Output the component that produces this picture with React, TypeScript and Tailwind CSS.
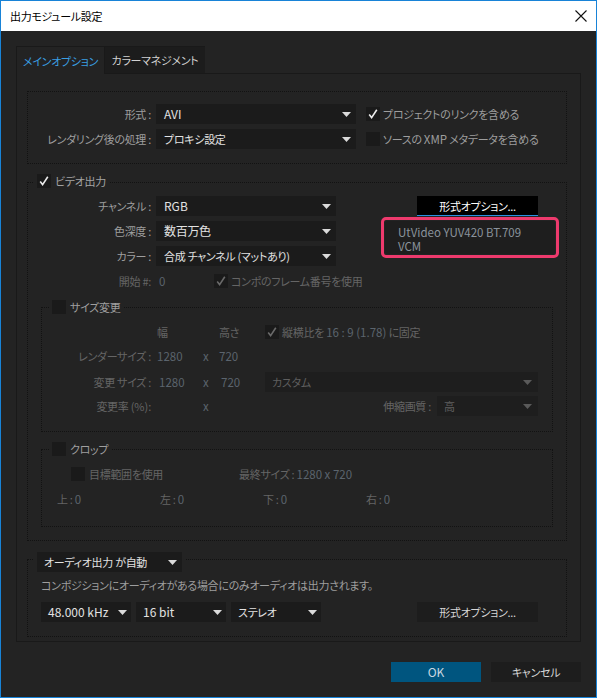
import React from "react";

const Arrow = ({ dim = false }: { dim?: boolean }) => (
  <svg width="9" height="5" viewBox="0 0 9 5" className="shrink-0">
    <path d="M0 0H9L4.5 5Z" fill={dim ? "#5a5a5a" : "#dadada"} />
  </svg>
);

const Check = ({ checked = false, dim = false }: { checked?: boolean; dim?: boolean }) => (
  <div className="flex h-[14px] w-[14px] shrink-0 items-center justify-center bg-[#1a1a1a]">
    {checked && (
      <svg width="12" height="12" viewBox="0 0 12 12">
        <path d="M2.2 6.6L4.6 9.6L9.8 1.8" fill="none" stroke={dim ? "#6a6a6a" : "#ececec"} strokeWidth="1.6" />
      </svg>
    )}
  </div>
);

const LAT = "text-[12px] tracking-normal";

function Select({
  className,
  text,
  dim = false,
  latin = false,
}: {
  className: string;
  text: string;
  dim?: boolean;
  latin?: boolean;
}) {
  return (
    <div className={`flex h-[20px] shrink-0 items-center justify-between ${className}`}>
      <span className={`${dim ? "text-[#5e5e5e]" : "text-[#e2e2e2]"} ${latin ? LAT : ""}`}>{text}</span>
      <Arrow dim={dim} />
    </div>
  );
}

const LBL = "text-[#9e9e9e]";
const DIM = "text-[#656565]";
const NUM = "text-[#5b646d] text-[11.5px] tracking-normal";

export default function App() {
  return (
    <div className="flex h-[698px] w-[597px] flex-col whitespace-nowrap border border-[#1883d7] bg-[#232323] font-['Noto_Sans_CJK_JP',sans-serif] text-[11px] leading-[14px] tracking-[-0.3px] [font-feature-settings:'palt']">
      {/* title bar */}
      <div className="flex h-[30px] shrink-0 items-center justify-between bg-white pl-[9px] pr-[9px] text-black">
        <span>出力モジュール設定</span>
        <svg width="12" height="12" viewBox="0 0 12 12">
          <path d="M0.5 0.5L11.5 11.5M11.5 0.5L0.5 11.5" stroke="#111" strokeWidth="1.1" />
        </svg>
      </div>

      <div className="flex flex-col pl-[15px] pt-[15px]">
        {/* tabs */}
        <div className="flex h-[28px] w-[565px]">
          <div className="flex w-[89px] shrink-0 items-center justify-center border-l border-r border-t border-[#191919] text-[#3a9fe2]">
            メインオプション
          </div>
          <div className="flex w-[100px] shrink-0 items-center justify-center border-b border-t border-[#191919] bg-[#1c1c1c] text-[#d2d2d2]">
            カラーマネジメント
          </div>
          <div className="flex-1 border-b border-[#191919]" />
        </div>

        {/* panel */}
        <div className="flex h-[568px] w-[565px] flex-col border-b border-l border-r border-[#191919] pl-[10px] pt-[17px]">
          {/* group 1 */}
          <div className="flex h-[73px] w-[540px] flex-col gap-[5px] border border-dotted border-[#121212] pt-[12px]">
            <div className="flex items-center">
              <span className={`w-[123px] text-right ${LBL}`}>形式 :</span>
              <Select className="ml-[5px] w-[200px] bg-[#1b1b1b] pl-[8px] pr-[5px]" text="AVI" latin />
              <div className="ml-[10px]"><Check checked /></div>
              <span className={`ml-[3px] ${LBL}`}>プロジェクトのリンクを含める</span>
            </div>
            <div className="flex items-center">
              <span className={`w-[123px] text-right ${LBL}`}>レンダリング後の処理 :</span>
              <Select className="ml-[5px] w-[200px] bg-[#1b1b1b] pl-[8px] pr-[5px]" text="プロキシ設定" />
              <div className="ml-[10px]"><Check /></div>
              <span className={`ml-[3px] ${LBL}`}>
                ソースの <span className="text-[11.5px] tracking-normal">XMP</span> メタデータを含める
              </span>
            </div>
          </div>

          {/* video group */}
          <div className="relative mt-[18px] h-[359px] w-[540px] border border-dotted border-[#121212]">
            <div className="absolute left-[6px] top-[-9px] flex items-center gap-[4px] bg-[#232323] px-[3px]">
              <Check checked />
              <span className="text-[#a3a3a3]">ビデオ出力</span>
            </div>

            <div className="flex pt-[13px]">
              <div className="flex w-[308px] shrink-0 flex-col">
                <div className="flex flex-col gap-[5px]">
                  <div className="flex items-center">
                    <span className={`w-[123px] text-right ${LBL}`}>チャンネル :</span>
                    <Select className="ml-[5px] w-[180px] bg-[#1b1b1b] pl-[8px] pr-[5px]" text="RGB" latin />
                  </div>
                  <div className="flex items-center">
                    <span className={`w-[123px] text-right ${LBL}`}>色深度 :</span>
                    <Select className="ml-[5px] w-[180px] bg-[#1b1b1b] pl-[8px] pr-[5px] text-[12px]" text="数百万色" />
                  </div>
                  <div className="flex items-center">
                    <span className={`w-[123px] text-right ${LBL}`}>カラー :</span>
                    <Select className="ml-[5px] w-[180px] bg-[#1b1b1b] pl-[8px] pr-[5px]" text="合成 チャンネル (マットあり)" />
                  </div>
                </div>
                <div className="mt-[8px] flex h-[14px] items-center">
                  <span className={`w-[123px] shrink-0 text-right ${DIM}`}>開始 #:</span>
                  <span className={`ml-[8px] w-[55px] shrink-0 ${NUM}`}>0</span>
                  <Check checked dim />
                  <span className={`ml-[3px] ${DIM}`}>コンポのフレーム番号を使用</span>
                </div>
              </div>

              <div className="ml-[45px] flex w-[178px] shrink-0 flex-col">
                <div className="ml-[36px] flex h-[20px] w-[121px] items-center justify-center border-b border-[#2a8fe0] bg-black text-white">
                  形式オプション...
                </div>
                <div className="mt-[1px] h-[41px] rounded-[5px] border-[3px] border-[#ee3a6d] p-[1px]">
                  <div className="flex h-full flex-col rounded-[3px] bg-[#1e1e1e] pl-[13px] pt-[4px] text-[11.5px] leading-[14px] tracking-normal text-[#8a939c]">
                    <span>UtVideo YUV420 BT.709</span>
                    <span>VCM</span>
                  </div>
                </div>
              </div>
            </div>

            {/* size group */}
            <div className="relative ml-[13px] mt-[19px] h-[125px] w-[512px] border border-dotted border-[#121212]">
              <div className="absolute left-[7px] top-[-8px] flex items-center gap-[4px] bg-[#232323] px-[3px]">
                <Check />
                <span className="text-[#9f9f9f]">サイズ変更</span>
              </div>
              <div className="flex flex-col pt-[17px]">
                <div className="flex h-[14px] items-center">
                  <span className="w-[109px] shrink-0" />
                  <span className={`ml-[6px] w-[62px] shrink-0 ${DIM}`}>幅</span>
                  <span className={`w-[46px] shrink-0 ${DIM}`}>高さ</span>
                  <Check checked dim />
                  <span className={`ml-[3px] ${DIM}`}>
                    縦横比を <span className={NUM}>16 : 9 (1.78)</span> に固定
                  </span>
                </div>
                <div className="mt-[10px] flex h-[14px] items-center">
                  <span className={`w-[109px] shrink-0 text-right ${DIM}`}>レンダーサイズ :</span>
                  <span className={`ml-[6px] w-[46px] shrink-0 ${NUM}`}>1280</span>
                  <span className={`w-[16px] shrink-0 ${NUM}`}>x</span>
                  <span className={`w-[46px] shrink-0 ${NUM}`}>720</span>
                </div>
                <div className="mt-[9px] flex h-[20px] items-center">
                  <span className={`w-[109px] shrink-0 text-right ${DIM}`}>変更 サイズ :</span>
                  <span className={`ml-[6px] w-[46px] shrink-0 pl-[2px] ${NUM}`}>1280</span>
                  <span className={`w-[16px] shrink-0 ${NUM}`}>x</span>
                  <span className={`w-[46px] shrink-0 pl-[2px] ${NUM}`}>720</span>
                  <Select className="w-[273px] bg-[#1e1e1e] pl-[7px] pr-[6px]" text="カスタム" dim />
                </div>
                <div className="mt-[4px] flex h-[20px] items-center">
                  <span className={`w-[109px] shrink-0 text-right ${DIM}`}>
                    変更率 <span className="tracking-normal">(%)</span>:
                  </span>
                  <span className="ml-[6px] w-[46px] shrink-0" />
                  <span className={`w-[16px] shrink-0 ${NUM}`}>x</span>
                  <span className={`w-[212px] shrink-0 text-right ${DIM}`}>伸縮画質 :</span>
                  <Select className="ml-[6px] w-[101px] bg-[#1e1e1e] pl-[7px] pr-[6px]" text="高" dim />
                </div>
              </div>
            </div>

            {/* crop group */}
            <div className="relative ml-[13px] mt-[17px] h-[78px] w-[512px] border border-dotted border-[#121212]">
              <div className="absolute left-[7px] top-[-8px] flex items-center gap-[4px] bg-[#232323] px-[3px]">
                <Check />
                <span className="text-[#9f9f9f]">クロップ</span>
              </div>
              <div className="flex flex-col pt-[17px]">
                <div className="flex h-[14px] items-center pl-[29px]">
                  <Check />
                  <span className={`ml-[4px] w-[150px] shrink-0 ${DIM}`}>目標範囲を使用</span>
                  <span className={DIM}>
                    最終サイズ : <span className={NUM}>1280 x 720</span>
                  </span>
                </div>
                <div className="mt-[11px] flex h-[14px] items-center pl-[15px]">
                  <span className={`w-[103px] shrink-0 ${DIM}`}>上 : <span className={NUM}>0</span></span>
                  <span className={`w-[103px] shrink-0 ${DIM}`}>左 : <span className={NUM}>0</span></span>
                  <span className={`w-[103px] shrink-0 ${DIM}`}>下 : <span className={NUM}>0</span></span>
                  <span className={`w-[103px] shrink-0 ${DIM}`}>右 : <span className={NUM}>0</span></span>
                </div>
              </div>
            </div>
          </div>

          {/* audio group */}
          <div className="relative mt-[18px] h-[78px] w-[540px] border border-dotted border-[#121212]">
            <div className="absolute left-[5px] top-[-8px] bg-[#232323] px-[4px]">
              <Select className="w-[145px] bg-[#1b1b1b] pl-[7px] pr-[5px]" text="オーディオ出力 が自動" />
            </div>
            <div className="flex flex-col pl-[13px] pt-[18px]">
              <span className={LBL}>コンポジションにオーディオがある場合にのみオーディオは出力されます。</span>
              <div className="mt-[10px] flex items-center gap-[5px]">
                <Select className="w-[90px] bg-[#1b1b1b] pl-[7px] pr-[4px]" text="48.000 kHz" latin />
                <Select className="w-[90px] bg-[#1b1b1b] pl-[7px] pr-[4px]" text="16 bit" latin />
                <Select className="w-[90px] bg-[#1b1b1b] pl-[7px] pr-[4px]" text="ステレオ" />
                <div className="ml-[91px] flex h-[20px] w-[121px] items-center justify-center bg-[#1d1d1d] text-[#d6d6d6]">
                  形式オプション...
                </div>
              </div>
            </div>
          </div>
        </div>

        {/* bottom buttons */}
        <div className="mt-[20px] flex w-[565px] justify-end gap-[10px]">
          <div className={`flex h-[20px] w-[90px] items-center justify-center bg-[#00557f] text-[#c9d7e1] ${LAT}`}>OK</div>
          <div className="flex h-[20px] w-[90px] items-center justify-center bg-[#1d1d1d] text-[#d6d6d6]">キャンセル</div>
        </div>
      </div>
    </div>
  );
}
